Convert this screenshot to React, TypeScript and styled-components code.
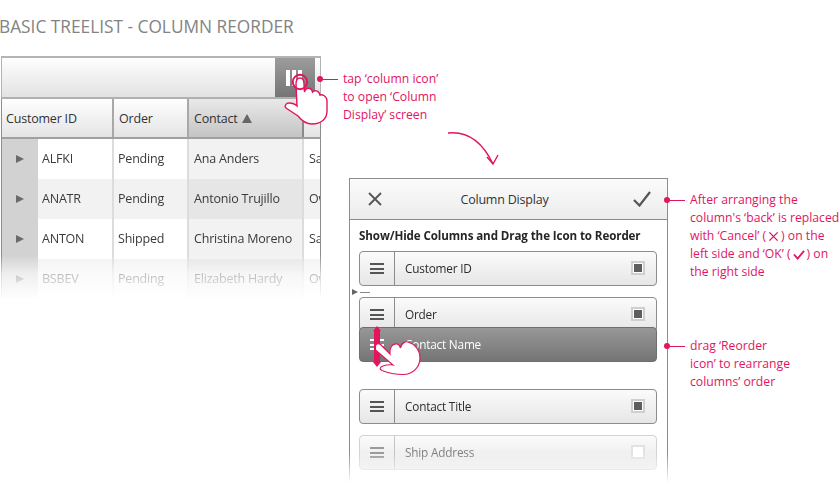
import React from 'react'
import styled, { createGlobalStyle } from 'styled-components'
// ______________________________________________________
//
const PINK = '#e2155f'
const FONT = '"Open Sans", "Noto Sans", sans-serif'

const rows = [
  ['ALFKI', 'Pending', 'Ana Anders', 'Sales'],
  ['ANATR', 'Pending', 'Antonio Trujillo', 'Owner'],
  ['ANTON', 'Shipped', 'Christina Moreno', 'Sales'],
  ['BSBEV', 'Pending', 'Elizabeth Hardy', 'Owner'],
]
// ______________________________________________________
//
const Global = createGlobalStyle`
  html, body { margin: 0; padding: 0; background: #fff; }
  body { font-family: ${FONT}; }
`

const Page = styled.div`
  position: relative;
  width: 840px;
  height: 483px;
  overflow: hidden;
  background: #fff;
  letter-spacing: -0.2px;
`

const Title = styled.h1`
  margin: 0 0 0 -1px;
  padding: 15px 0 0 0;
  height: 42px;
  box-sizing: border-box;
  font-size: 17.3px;
  line-height: 24px;
  font-weight: 400;
  letter-spacing: 0;
  color: #838383;
  white-space: nowrap;
`

const Columns = styled.div`
  display: flex;
  align-items: flex-start;
`
// ______________________________________________________
//
const TreeList = styled.div`
  width: 320px;
  margin: 14px 0 0 1px;
  flex: none;
`

const Toolbar = styled.div`
  display: flex;
  justify-content: flex-end;
  height: 43px;
  box-sizing: border-box;
  padding-right: 5px;
  border: 1px solid #b4b4b4;
  border-top: 2px solid #b4b4b4;
  border-bottom: 2px solid #b0b0b0;
  background: linear-gradient(#fefefe, #e2e2e2);
`

const ColumnButton = styled.div`
  width: 40px;
  display: flex;
  align-items: center;
  justify-content: center;
  gap: 2px;
  padding-right: 2px;
  box-sizing: border-box;
  background: linear-gradient(#9c9c9c, #757575);
`

const ColumnBar = styled.span`
  width: 4px;
  height: 16px;
  background: #fff;
`

const HeaderRow = styled.div`
  display: grid;
  grid-template-columns: 112px 75px 115px 1fr;
  height: 40px;
  box-sizing: border-box;
  border-left: 1px solid #8c8c8c;
  border-right: 1px solid #8c8c8c;
  border-bottom: 2px solid #a0a0a0;
`

const HeaderCell = styled.div<{ $active?: boolean }>`
  display: flex;
  align-items: center;
  gap: 4px;
  padding-left: 5px;
  font-size: 12.5px;
  color: #333;
  border-right: 2px solid ${(p) => (p.$active ? '#8a8a8a' : '#a8a8a8')};
  background: ${(p) =>
    p.$active
      ? 'linear-gradient(#e9e9e9, #c4c4c4)'
      : 'linear-gradient(#fefefe, #e4e4e4)'};
  &:first-child {
    padding-left: 4px;
  }
  &:last-child {
    border-right: 0;
  }
`

const SortArrow = styled.span`
  width: 0;
  height: 0;
  border-left: 5px solid transparent;
  border-right: 5px solid transparent;
  border-bottom: 9px solid #666;
`

const Body = styled.div`
  height: 161px;
  border-left: 1px solid #8c8c8c;
  border-right: 1px solid #8c8c8c;
  -webkit-mask-image: linear-gradient(#000 72%, rgba(0, 0, 0, 0.35) 84%, transparent 100%);
  mask-image: linear-gradient(#000 72%, rgba(0, 0, 0, 0.35) 84%, transparent 100%);
`

const Row = styled.div<{ $alt?: boolean }>`
  display: grid;
  grid-template-columns: 36px 76px 75px 115px 1fr;
  height: 40px;
  background: ${(p) => (p.$alt ? '#f2f2f2' : '#fff')};
`

const Expander = styled.div`
  display: flex;
  align-items: center;
  justify-content: center;
  background: #d2d2d2;
`

const ExpandArrow = styled.span`
  width: 0;
  height: 0;
  border-top: 4.5px solid transparent;
  border-bottom: 4.5px solid transparent;
  border-left: 8px solid #6a6a6a;
`

const Cell = styled.div<{ $sorted?: boolean; $alt?: boolean; $last?: boolean }>`
  display: flex;
  align-items: center;
  overflow: hidden;
  white-space: nowrap;
  box-sizing: border-box;
  padding-left: ${(p) => (p.$last || p.$sorted ? 5 : 4)}px;
  padding-bottom: 2px;
  font-size: 12.5px;
  color: #3a3a3a;
  border-right: ${(p) => (p.$last ? '0' : '2px solid #dcdcdc')};
  background: ${(p) =>
    p.$sorted ? (p.$alt ? '#e6e6e6' : '#f2f2f2') : 'transparent'};
`
// ______________________________________________________
//
const RightSide = styled.div`
  flex: none;
  width: 519px;
`

const TapNote = styled.div`
  display: flex;
  align-items: flex-start;
  margin-top: 28px;
  height: 54px;
`

const Curve = styled.svg`
  display: block;
  margin: 7px 0 0 127px;
  width: 54px;
  height: 41px;
`

const DialogRow = styled.div`
  display: flex;
  align-items: flex-start;
  margin-top: 6px;
  margin-left: 28px;
`

const Dialog = styled.div`
  width: 319px;
  height: 305px;
  flex: none;
  box-sizing: border-box;
  border: 1px solid #8c8c8c;
  border-bottom: 0;
  -webkit-mask-image: linear-gradient(#000 90%, transparent 100%);
  mask-image: linear-gradient(#000 90%, transparent 100%);
`

const DialogBar = styled.div`
  display: flex;
  align-items: center;
  justify-content: space-between;
  height: 41px;
  box-sizing: border-box;
  padding: 0 16px 0 18px;
  border-bottom: 1px solid #8c8c8c;
  background: linear-gradient(#fbfbfb, #ececec);
  font-size: 12.5px;
  color: #333;
`

const BarTitle = styled.span`
  margin-right: 6px;
`

const Instruction = styled.div`
  padding: 7px 0 0 9px;
  height: 31px;
  box-sizing: border-box;
  font-size: 11.6px;
  line-height: 17px;
  font-weight: 700;
  color: #262626;
  white-space: nowrap;
  letter-spacing: -0.1px;
`

const Item = styled.div<{ $top?: number; $disabled?: boolean; $dragged?: boolean }>`
  display: flex;
  align-items: center;
  width: 298px;
  height: 35px;
  box-sizing: border-box;
  margin: ${(p) => p.$top ?? 11}px 0 0 9px;
  position: relative;
  border-radius: 4px;
  border: 1px solid ${(p) => (p.$dragged ? '#6e6e6e' : p.$disabled ? '#d2d2d2' : '#8c8c8c')};
  background: ${(p) =>
    p.$dragged
      ? 'linear-gradient(#979797, #757575)'
      : 'linear-gradient(#fbfbfb, #e6e6e6)'};
  color: ${(p) => (p.$dragged ? '#fff' : p.$disabled ? '#7c7c7c' : '#2c2c2c')};
  font-size: 11.8px;
`

const Handle = styled.div<{ $dragged?: boolean; $disabled?: boolean }>`
  width: 35px;
  height: 100%;
  flex: none;
  box-sizing: border-box;
  display: flex;
  flex-direction: column;
  align-items: center;
  justify-content: center;
  gap: 2.5px;
  border-right: 1px solid ${(p) => (p.$dragged ? 'transparent' : p.$disabled ? '#c4c4c4' : '#8c8c8c')};
  & > span {
    width: 14px;
    height: 2px;
    background: ${(p) => (p.$dragged ? '#fff' : p.$disabled ? '#9a9a9a' : '#555')};
  }
`

const Label = styled.div`
  flex: 1;
  padding: 0 0 2px 10px;
`

const Check = styled.div<{ $checked?: boolean }>`
  width: 14px;
  height: 14px;
  margin: 0 11px 2px 0;
  box-sizing: border-box;
  border: 2px solid ${(p) => (p.$checked ? '#cfcfcf' : '#e2e2e2')};
  background: #fff;
  display: flex;
  align-items: center;
  justify-content: center;
  &::after {
    content: '';
    display: ${(p) => (p.$checked ? 'block' : 'none')};
    width: 8px;
    height: 8px;
    background: #5e5e5e;
  }
`

const DropMarker = styled.div`
  position: absolute;
  left: 352px;
  top: 289px;
  display: flex;
  align-items: center;
  gap: 2px;
  &::before {
    content: '';
    border-top: 3.5px solid transparent;
    border-bottom: 3.5px solid transparent;
    border-left: 6px solid #666;
  }
  &::after {
    content: '';
    width: 10px;
    height: 1px;
    background: #888;
  }
`
// ______________________________________________________
//
const Notes = styled.div`
  display: flex;
  flex-direction: column;
  padding-top: 13px;
  flex: none;
`

const Note = styled.div<{ $top?: number }>`
  display: flex;
  align-items: flex-start;
  margin-top: ${(p) => p.$top ?? 0}px;
`

const Leader = styled.div`
  flex: none;
  width: 21px;
  height: 18px;
  margin: 0 5px 0 -4px;
  position: relative;
  &::before {
    content: '';
    position: absolute;
    left: 0;
    top: 6px;
    width: 6px;
    height: 6px;
    border-radius: 50%;
    background: ${PINK};
  }
  &::after {
    content: '';
    position: absolute;
    left: 3px;
    right: 0;
    top: 8.5px;
    height: 1px;
    background: ${PINK};
  }
`

const NoteText = styled.div`
  font-size: 12.2px;
  line-height: 18px;
  letter-spacing: 0;
  color: ${PINK};
  white-space: nowrap;
`

const InlineIcon = styled.svg`
  display: inline-block;
  vertical-align: -2px;
  margin: 0 2px;
`

const Overlay = styled.svg<{ $left: number; $top: number }>`
  position: absolute;
  left: ${(p) => p.$left}px;
  top: ${(p) => p.$top}px;
  pointer-events: none;
`
// ______________________________________________________
//
const CloseIcon = () => (
  <svg width="14" height="14" viewBox="0 0 14 14">
    <path d="M1 1 L13 13 M13 1 L1 13" stroke="#555" strokeWidth="1.8" fill="none" />
  </svg>
)

const CheckIcon = () => (
  <svg width="18" height="16" viewBox="0 0 18 16">
    <path d="M1 9 L6.5 14.5 L17 1" stroke="#555" strokeWidth="2.2" fill="none" />
  </svg>
)

const TapHand = () => (
  <Overlay $left={280} $top={70} width="52" height="58" viewBox="280 70 52 58">
    <path
      d="M296 84 C296 80 298 78 300 78 C302 78 304 80 304 84 L304.5 92 C306 87 311 87 312.5 92 C314 90 319 90 320 95 C322 94 327 96 327 101 L327 111 C327 119 321 124 312 124 C306 124 302 121 298 116 L286 108 C284 106 286 103 289 103 C292 103 295 104 297 106 Z"
      fill="#fff"
      stroke={PINK}
      strokeWidth="1.4"
    />
    <circle cx="300" cy="82" r="7.2" fill="none" stroke={PINK} strokeWidth="2" />
  </Overlay>
)

const DragHand = () => (
  <Overlay $left={368} $top={322} width="56" height="56" viewBox="368 322 56 56">
    <path d="M377 326 L381 331 L380 331 L380 362 L381 362 L377 367 L373 362 L374 362 L374 331 L373 331 Z" fill={PINK} />
    <path
      d="M375.5 347 C375 344 378 342.5 380.5 344.5 L390 354 C389 349 392 343 397 344 C399 344.5 400 346 400.5 348 C401 343 406 340.5 409 342.5 C415 344 420 350 420 358 C420 367 413 374.5 403 374.5 C396 374.5 388 373 382 370.5 C379 369 380 367 383 366 C386 365 390 364.5 393 365 L375.5 350 Z"
      fill="#fff"
      stroke={PINK}
      strokeWidth="1.2"
    />
  </Overlay>
)
// ______________________________________________________
//
const App: React.FC = () => (
  <Page>
    <Global />
    <Title>BASIC TREELIST - COLUMN REORDER</Title>
    <Columns>
      <TreeList>
        <Toolbar>
          <ColumnButton>
            <ColumnBar />
            <ColumnBar />
            <ColumnBar />
          </ColumnButton>
        </Toolbar>
        <HeaderRow>
          <HeaderCell>Customer ID</HeaderCell>
          <HeaderCell>Order</HeaderCell>
          <HeaderCell $active>
            Contact <SortArrow />
          </HeaderCell>
          <HeaderCell />
        </HeaderRow>
        <Body>
          {rows.map((r, i) => (
            <Row key={r[0]} $alt={i % 2 === 1}>
              <Expander>
                <ExpandArrow />
              </Expander>
              <Cell>{r[0]}</Cell>
              <Cell>{r[1]}</Cell>
              <Cell $sorted $alt={i % 2 === 1}>
                {r[2]}
              </Cell>
              <Cell $last>{r[3]}</Cell>
            </Row>
          ))}
        </Body>
      </TreeList>
      <RightSide>
        <TapNote>
          <Leader />
          <NoteText>
            tap ‘column icon’
            <br />
            to open ‘Column
            <br />
            Display’ screen
          </NoteText>
        </TapNote>
        <Curve viewBox="0 0 54 41">
          <path d="M0 2 C18 0 34 10 45 33" stroke={PINK} strokeWidth="1.4" fill="none" />
          <path d="M39 26 L45 33 L50 24" stroke={PINK} strokeWidth="1.4" fill="none" />
        </Curve>
        <DialogRow>
          <Dialog>
            <DialogBar>
              <CloseIcon />
              <BarTitle>Column Display</BarTitle>
              <CheckIcon />
            </DialogBar>
            <Instruction>Show/Hide Columns and Drag the Icon to Reorder</Instruction>
            <Item $top={0}>
              <Handle>
                <span />
                <span />
                <span />
              </Handle>
              <Label>Customer ID</Label>
              <Check $checked />
            </Item>
            <Item>
              <Handle>
                <span />
                <span />
                <span />
              </Handle>
              <Label>Order</Label>
              <Check $checked />
            </Item>
            <Item $top={-5} $dragged>
              <Handle $dragged>
                <span />
                <span />
                <span />
              </Handle>
              <Label>Contact Name</Label>
            </Item>
            <Item $top={27}>
              <Handle>
                <span />
                <span />
                <span />
              </Handle>
              <Label>Contact Title</Label>
              <Check $checked />
            </Item>
            <Item $disabled>
              <Handle $disabled>
                <span />
                <span />
                <span />
              </Handle>
              <Label>Ship Address</Label>
              <Check />
            </Item>
          </Dialog>
          <Notes>
            <Note>
              <Leader />
              <NoteText>
                After arranging the
                <br />
                column's ‘back’ is replaced
                <br />
                with ‘Cancel’ (
                <InlineIcon width="11" height="11" viewBox="0 0 12 12">
                  <path d="M1.5 1.5 L10.5 10.5 M10.5 1.5 L1.5 10.5" stroke={PINK} strokeWidth="1.5" fill="none" />
                </InlineIcon>
                ) on the
                <br />
                left side and ‘OK’ (
                <InlineIcon width="12" height="11" viewBox="0 0 13 12">
                  <path d="M1 6 L5 10.5 L12 2" stroke={PINK} strokeWidth="2" fill="none" />
                </InlineIcon>
                ) on
                <br />
                the right side
              </NoteText>
            </Note>
            <Note $top={56}>
              <Leader />
              <NoteText>
                drag ‘Reorder
                <br />
                icon’ to rearrange
                <br />
                columns’ order
              </NoteText>
            </Note>
          </Notes>
        </DialogRow>
      </RightSide>
    </Columns>
    <DropMarker />
    <TapHand />
    <DragHand />
  </Page>
)
// ______________________________________________________
//
export default App
